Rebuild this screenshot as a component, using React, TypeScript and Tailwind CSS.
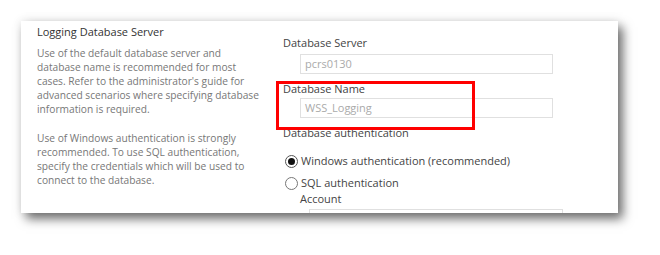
import React from "react";

function Radio({ checked }: { checked?: boolean }) {
  return (
    <span
      className={
        "flex h-[13px] w-[13px] shrink-0 items-center justify-center rounded-full border bg-white " +
        (checked ? "border-[#555]" : "border-[#777]")
      }
    >
      {checked && <span className="h-[7px] w-[7px] rounded-full bg-[#111]" />}
    </span>
  );
}

export default function App() {
  return (
    <div
      className="h-[255px] w-[660px] bg-white pl-[21px] pt-[21px]"
      style={{ fontFamily: '"Open Sans", "Noto Sans", sans-serif' }}
    >
      <div className="relative flex h-[192px] w-[597px] overflow-hidden bg-white shadow-[5px_6px_10px_rgba(0,0,0,0.55),0_0_10px_rgba(0,0,0,0.1)]">
        <div className="w-[262px] shrink-0 pl-[16px] pt-[3px]">
          <div className="text-[11px] leading-[16px] text-[#333]">Logging Database Server</div>
          <p className="mt-[6px] whitespace-nowrap text-[10.2px] leading-[14px] text-[#777]">
            Use of the default database server and
            <br />
            database name is recommended for most
            <br />
            cases. Refer to the administrator's guide for
            <br />
            advanced scenarios where specifying database
            <br />
            information is required.
          </p>
          <p className="mt-[15px] whitespace-nowrap text-[10.2px] leading-[14px] text-[#777]">
            Use of Windows authentication is strongly
            <br />
            recommended. To use SQL authentication,
            <br />
            specify the credentials which will be used to
            <br />
            connect to the database.
          </p>
        </div>
        <div className="flex-1 pt-[14px] text-[11px] text-[#444]">
          <div className="leading-[16px]">Database Server</div>
          <div className="ml-[17px] mt-[3px] flex h-[20px] w-[253px] items-center border border-[#e0e0e0] pl-[4px] text-[#aaa]">
            pcrs0130
          </div>
          <div className="mt-[7px] leading-[16px]">Database Name</div>
          <div className="ml-[17px] mt-[1px] flex h-[20px] w-[253px] items-center border border-[#e0e0e0] pl-[4px] text-[#aaa]">
            WSS_Logging
          </div>
          <div className="mt-[7px] leading-[16px]">Database authentication</div>
          <div className="ml-[2px] mt-[10px] flex items-center gap-[3px] leading-[20px]">
            <Radio checked />
            <span>Windows authentication (recommended)</span>
          </div>
          <div className="ml-[2px] mt-[2px] flex items-center gap-[3px] leading-[20px]">
            <Radio />
            <span>SQL authentication</span>
          </div>
          <div className="ml-[17px] mt-[-2px] leading-[16px]">Account</div>
          <div className="ml-[26px] mt-[2px] h-[20px] w-[254px] border border-[#e0e0e0]" />
        </div>
        <div className="absolute left-[255px] top-[60px] h-[49px] w-[199px] border-[3px] border-[#f00]" />
      </div>
    </div>
  );
}
